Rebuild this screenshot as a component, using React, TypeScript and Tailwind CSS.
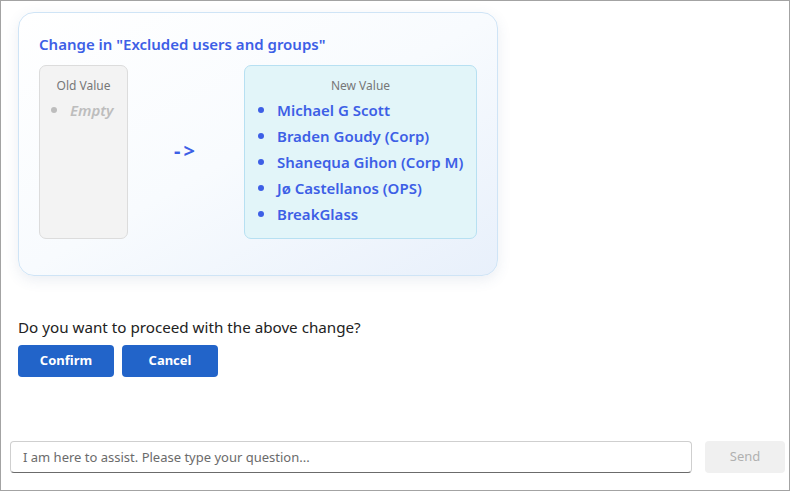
import React from "react";

const newValues = [
  "Michael G Scott",
  "Braden Goudy (Corp)",
  "Shanequa Gihon (Corp M)",
  "Jø Castellanos (OPS)",
  "BreakGlass",
];

function Bullet({ color }: { color: string }) {
  return <span className={`inline-block h-[6px] w-[6px] shrink-0 rounded-full ${color}`} />;
}

export default function App() {
  const [question, setQuestion] = React.useState("");

  return (
    <div
      className="flex h-[491px] w-[790px] flex-col overflow-hidden border border-[#a3a3a3] bg-white"
      style={{ fontFamily: '"Noto Sans", "Open Sans", sans-serif' }}
    >
      <main className="px-[17px] pt-[11px]">
        {/* change card */}
        <div className="w-[480px] rounded-[16px] border border-[#cfe4f6] bg-linear-to-br from-white via-[#f8fbfe] to-[#e8f0fb] px-[20px] pt-[20px] pb-[36px] shadow-[0_4px_14px_rgba(60,90,140,0.1)]">
          <h2 className="text-[15px] leading-[22px] font-semibold text-[#3d5fe6]">
            Change in "Excluded users and groups"
          </h2>
          <div className="mt-[10px] flex items-stretch">
            <div className="h-[174px] w-[89px] rounded-[7px] border border-[#dcdcdc] bg-[#f3f3f3] pt-[10px]">
              <p className="text-center text-[12px] leading-[20px] text-[#777]">Old Value</p>
              <div className="mt-[1px] flex items-center gap-[13px] pl-[11px] text-[15px] leading-[26px] font-semibold text-[#bdbdbd] italic">
                <Bullet color="bg-[#bdbdbd]" />
                Empty
              </div>
            </div>
            <div className="flex flex-1 items-center justify-center">
              <span className="pb-[2px] text-[20px] font-bold tracking-[3px] text-[#3d5fe6]">-&gt;</span>
            </div>
            <div className="h-[174px] w-[233px] rounded-[7px] border border-[#b7e0f2] bg-[#e2f5f9] pt-[10px]">
              <p className="text-center text-[12px] leading-[20px] text-[#777]">New Value</p>
              <ul className="mt-[1px]">
                {newValues.map((v) => (
                  <li
                    key={v}
                    className="flex items-center gap-[13px] pl-[13px] text-[15px] leading-[26px] font-semibold text-[#3d5fe6]"
                  >
                    <Bullet color="bg-[#3d5fe6]" />
                    {v}
                  </li>
                ))}
              </ul>
            </div>
          </div>
        </div>

        <p className="mt-[40px] text-[15.2px] leading-[22px] text-[#222]">
          Do you want to proceed with the above change?
        </p>
        <div className="mt-[7px] flex gap-[8px]">
          <button className="h-[32px] w-[96px] rounded-[4px] bg-[#2264c9] text-[13px] font-bold text-white">
            Confirm
          </button>
          <button className="h-[32px] w-[96px] rounded-[4px] bg-[#2264c9] text-[13px] font-bold text-white">
            Cancel
          </button>
        </div>
      </main>

      <div className="mt-auto flex items-center gap-[13px] pr-[4px] pb-[17px] pl-[9px]">
        <input
          value={question}
          onChange={(e) => setQuestion(e.target.value)}
          placeholder="I am here to assist. Please type your question..."
          className="h-[32px] flex-1 rounded-[4px] border border-[#cfcfcf] border-b-[#6b6b6b] px-[12px] text-[13px] text-[#333] outline-none placeholder:text-[#6b6b6b]"
        />
        <button className="h-[32px] w-[80px] rounded-[4px] bg-[#f0f0f0] text-[13px] text-[#b0b0b0]">
          Send
        </button>
      </div>
    </div>
  );
}
